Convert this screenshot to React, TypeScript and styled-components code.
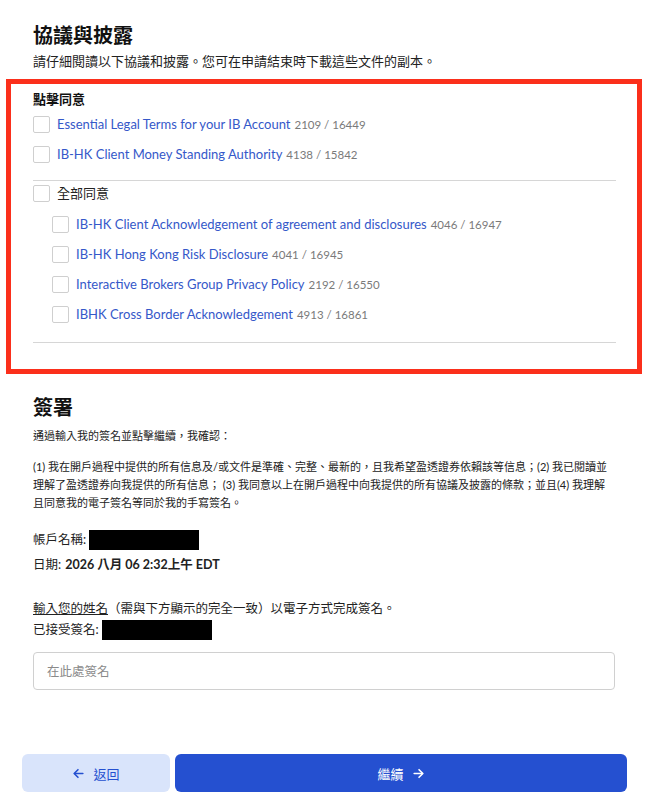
import styled, { createGlobalStyle } from "styled-components";

const GlobalStyle = createGlobalStyle`
  body {
    margin: 0;
    background: #fff;
    font-family: "Lato", "Noto Sans CJK TC", sans-serif;
    color: #1a1a1a;
  }
`;

const Page = styled.div`
  width: 667px;
  box-sizing: border-box;
  padding: 22px 52px 19px 33px;
`;

const Title = styled.h1`
  margin: 0;
  font-size: 20px;
  line-height: 26px;
  font-weight: 700;
  color: #111;
`;

const Lead = styled.p`
  margin: 4px 0 0;
  font-size: 13px;
  line-height: 18px;
  color: #222;
`;

const Highlight = styled.div`
  margin: 9px -27px 0 -27px;
  border: 5px solid #fb2f1b;
  padding: 6px 21px 26px 22px;
`;

const GroupLabel = styled.div`
  font-size: 13px;
  font-weight: 700;
  line-height: 18px;
  color: #111;
`;

const List = styled.div<{ $indent?: boolean }>`
  display: flex;
  flex-direction: column;
  gap: 13px;
  padding-left: ${(p) => (p.$indent ? "19px" : "0")};
  margin-top: ${(p) => (p.$indent ? "14px" : "8px")};
`;

const Row = styled.label`
  display: flex;
  align-items: center;
  gap: 7px;
  font-size: 13px;
  line-height: 17px;
`;

const Box = styled.span`
  width: 17px;
  height: 17px;
  box-sizing: border-box;
  border: 1px solid #cfcfcf;
  border-radius: 2px;
  flex: none;
`;

const DocLink = styled.a`
  color: #3558c9;
  text-decoration: none;
`;

const Count = styled.span`
  color: #7a7a7a;
  font-size: 11.5px;
  margin-left: 4px;
`;

const Divider = styled.hr<{ $top: number }>`
  border: 0;
  border-top: 1px solid #d6d6d6;
  margin: ${(p) => p.$top}px 0 0;
`;

const AllRow = styled(Row)`
  margin-top: 4px;
  color: #222;
`;

const SignTitle = styled(Title)`
  margin-top: 20px;
`;

const Small = styled.p<{ $top: number }>`
  margin: ${(p) => p.$top}px 0 0;
  font-size: 11px;
  line-height: 18px;
  color: #222;
`;

const Field = styled.div<{ $top: number }>`
  display: flex;
  align-items: center;
  margin-top: ${(p) => p.$top}px;
  font-size: 12.5px;
  line-height: 20px;
  color: #222;
`;

const Redacted = styled.span<{ $w: number }>`
  display: inline-block;
  width: ${(p) => p.$w}px;
  height: 20px;
  background: #000;
  margin-left: 3px;
`;

const Strong = styled.b`
  margin-left: 4px;
  font-weight: 700;
`;

const Under = styled.span`
  text-decoration: underline;
`;

const Input = styled.input`
  display: block;
  width: 100%;
  box-sizing: border-box;
  height: 38px;
  margin-top: 12px;
  border: 1px solid #d0d0d0;
  border-radius: 4px;
  padding: 0 13px;
  font: inherit;
  font-size: 12.5px;
  &::placeholder {
    color: #8a8a8a;
  }
`;

const Actions = styled.div`
  display: grid;
  grid-template-columns: 148px 1fr;
  gap: 5px;
  margin: 64px -12px 0 -11px;
`;

const Button = styled.button<{ $primary?: boolean }>`
  height: 38px;
  border: 0;
  border-radius: 6px;
  display: flex;
  align-items: center;
  justify-content: center;
  gap: 8px;
  font-family: inherit;
  font-size: 13px;
  background: ${(p) => (p.$primary ? "#2550d0" : "#d9e4fb")};
  color: ${(p) => (p.$primary ? "#fff" : "#2550d0")};
`;

const Arrow = ({ dir }: { dir: "left" | "right" }) => (
  <svg width="13" height="13" viewBox="0 0 24 24" fill="none" stroke="currentColor" strokeWidth="3" strokeLinecap="round" strokeLinejoin="round">
    {dir === "left" ? (
      <>
        <path d="M20 12H5" />
        <path d="M11 5l-7 7 7 7" />
      </>
    ) : (
      <>
        <path d="M4 12h15" />
        <path d="M13 5l7 7-7 7" />
      </>
    )}
  </svg>
);

const topDocs = [
  { name: "Essential Legal Terms for your IB Account", count: "2109 / 16449" },
  { name: "IB-HK Client Money Standing Authority", count: "4138 / 15842" },
];

const allDocs = [
  { name: "IB-HK Client Acknowledgement of agreement and disclosures", count: "4046 / 16947" },
  { name: "IB-HK Hong Kong Risk Disclosure", count: "4041 / 16945" },
  { name: "Interactive Brokers Group Privacy Policy", count: "2192 / 16550" },
  { name: "IBHK Cross Border Acknowledgement", count: "4913 / 16861" },
];

const DocRow = ({ name, count }: { name: string; count: string }) => (
  <Row>
    <Box />
    <span>
      <DocLink href="#">{name}</DocLink>
      <Count>{count}</Count>
    </span>
  </Row>
);

export default function App() {
  return (
    <>
      <GlobalStyle />
      <Page>
        <Title>協議與披露</Title>
        <Lead>請仔細閱讀以下協議和披露。您可在申請結束時下載這些文件的副本。</Lead>

        <Highlight>
          <GroupLabel>點擊同意</GroupLabel>
          <List>
            {topDocs.map((d) => (
              <DocRow key={d.name} {...d} />
            ))}
          </List>
          <Divider $top={17} />
          <AllRow>
            <Box />
            全部同意
          </AllRow>
          <List $indent>
            {allDocs.map((d) => (
              <DocRow key={d.name} {...d} />
            ))}
          </List>
          <Divider $top={19} />
        </Highlight>

        <SignTitle>簽署</SignTitle>
        <Small $top={7}>通過輸入我的簽名並點擊繼續，我確認：</Small>
        <Small $top={13}>
          (1) 我在開戶過程中提供的所有信息及/或文件是準確、完整、最新的，且我希望盈透證券依賴該等信息；(2) 我已閱讀並理解了盈透證券向我提供的所有信息； (3) 我同意以上在開戶過程中向我提供的所有協議及披露的條款；並且(4) 我理解且同意我的電子簽名等同於我的手寫簽名。
        </Small>

        <Field $top={18}>
          帳戶名稱:
          <Redacted $w={110} />
        </Field>
        <Field $top={5}>
          日期:<Strong>2026 八月 06 2:32上午 EDT</Strong>
        </Field>
        <Field $top={24}>
          <Under>輸入您的姓名</Under>（需與下方顯示的完全一致）以電子方式完成簽名。
        </Field>
        <Field $top={1}>
          已接受簽名:
          <Redacted $w={110} />
        </Field>
        <Input placeholder="在此處簽名" />

        <Actions>
          <Button>
            <Arrow dir="left" />
            返回
          </Button>
          <Button $primary>
            繼續
            <Arrow dir="right" />
          </Button>
        </Actions>
      </Page>
    </>
  );
}
